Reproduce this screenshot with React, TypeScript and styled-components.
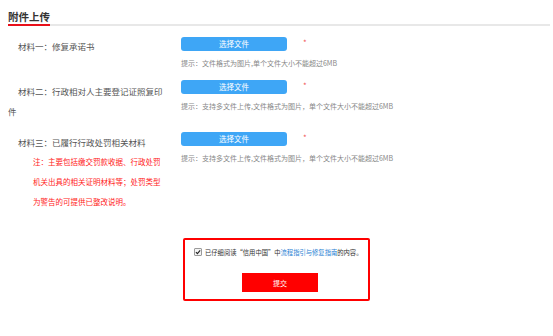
import React from 'react';
import styled, { createGlobalStyle } from 'styled-components';

const GlobalStyle = createGlobalStyle`
    html, body {
        margin: 0;
        padding: 0;
        background: #ffffff;
    }
    body {
        font-family: "Noto Sans CJK SC", "Noto Sans", sans-serif;
    }
`;

const Page = styled.div`
    width: 553px;
    height: 336px;
    padding: 0 3px 0 8px;
    box-sizing: border-box;
    overflow: hidden;
`;

const Header = styled.div`
    display: flex;
    padding-top: 10px;
    border-bottom: 2px solid #e8e8e8;
`;

const Title = styled.h2`
    margin: 0 0 -2px 0;
    font-size: 10.5px;
    line-height: 14px;
    font-weight: bold;
    color: #333333;
    border-bottom: 2px solid #e8101a;
`;

const Rows = styled.div`
    display: flex;
    flex-direction: column;
    gap: 11px;
    padding-top: 11px;
`;

const Row = styled.div`
    display: grid;
    grid-template-columns: 173px 1fr;
    align-items: start;
`;

const LabelCell = styled.div`
    width: 158px;
`;

const Label = styled.div<{ $lift?: number }>`
    font-size: 8.5px;
    line-height: 20px;
    color: #555555;
    text-indent: 10px;
    margin-top: ${p => (p.$lift ?? 0)}px;
`;

const Note = styled.div`
    font-size: 7.5px;
    line-height: 20px;
    color: #ff1a1a;
    width: 17.4em;
    margin-left: 25px;
`;

const Field = styled.div`
    display: flex;
    flex-direction: column;
`;

const ButtonLine = styled.div`
    display: flex;
    align-items: flex-start;
    gap: 16px;
`;

const PickButton = styled.button`
    width: 106px;
    height: 14px;
    padding: 0;
    border: none;
    border-radius: 3px;
    background: #3ea6f6;
    color: #ffffff;
    font-family: inherit;
    font-size: 7.5px;
    line-height: 14px;
    cursor: pointer;
`;

const Star = styled.span`
    color: #f25656;
    font-size: 8px;
    line-height: 8px;
    margin-top: 2px;
`;

const Hint = styled.div`
    margin-top: 6px;
    font-size: 7px;
    line-height: 12px;
    color: #888888;
    white-space: nowrap;
`;

const AgreeBox = styled.div`
    width: 187px;
    box-sizing: border-box;
    margin: 26px 0 0 175px;
    padding: 8px 8px 7px 9px;
    border: 2px solid #ff0000;
    border-radius: 2px;
    display: flex;
    flex-direction: column;
    align-items: center;
`;

const AgreeLine = styled.label`
    align-self: stretch;
    display: flex;
    align-items: center;
    gap: 3px;
    height: 8px;
    font-size: 6.3px;
    color: #333333;
    white-space: nowrap;
`;

const Check = styled.span`
    width: 8px;
    height: 8px;
    box-sizing: border-box;
    border: 1px solid #9a9a9a;
    border-radius: 1px;
    background: #f4f4f4;
    display: flex;
    align-items: center;
    justify-content: center;
    flex: none;
`;

const Link = styled.a`
    color: #2a7fd4;
    text-decoration: none;
`;

const SubmitButton = styled.button`
    margin-top: 17px;
    margin-left: 6px;
    width: 76px;
    height: 19px;
    padding: 0;
    border: none;
    background: #ff0000;
    color: #ffffff;
    font-family: inherit;
    font-size: 7px;
    cursor: pointer;
`;

interface Material {
    label: string;
    hint: string;
    note?: string;
}

const materials: Material[] = [
    {
        label: '材料一：修复承诺书',
        hint: '提示：文件格式为图片,单个文件大小不能超过6MB'
    },
    {
        label: '材料二：行政相对人主要登记证照复印件',
        hint: '提示：支持多文件上传,文件格式为图片，单个文件大小不能超过6MB'
    },
    {
        label: '材料三：已履行行政处罚相关材料',
        hint: '提示：支持多文件上传,文件格式为图片，单个文件大小不能超过6MB',
        note: '注：主要包括缴交罚款收据、行政处罚机关出具的相关证明材料等；处罚类型为警告的可提供已整改说明。'
    }
];

const App: React.FC = () => {
    return (
        <Page>
            <GlobalStyle />
            <Header>
                <Title>附件上传</Title>
            </Header>
            <Rows>
                {materials.map((m, i) => (
                    <Row key={i}>
                        <LabelCell>
                            <Label $lift={i === 0 ? -1 : i === 1 ? 1 : 0}>{m.label}</Label>
                            {m.note && <Note>{m.note}</Note>}
                        </LabelCell>
                        <Field>
                            <ButtonLine>
                                <PickButton type="button">选择文件</PickButton>
                                <Star>*</Star>
                            </ButtonLine>
                            <Hint>{m.hint}</Hint>
                        </Field>
                    </Row>
                ))}
            </Rows>
            <AgreeBox>
                <AgreeLine>
                    <Check>
                        <svg width="6" height="6" viewBox="0 0 10 10">
                            <path d="M1.5 5.2 L4 7.8 L8.6 2.2" fill="none" stroke="#222" strokeWidth="1.8" />
                        </svg>
                    </Check>
                    <span>
                        已仔细阅读“信用中国”中<Link href="#">流程指引与修复指南</Link>的内容。
                    </span>
                </AgreeLine>
                <SubmitButton type="button">提交</SubmitButton>
            </AgreeBox>
        </Page>
    );
};

export default App;
